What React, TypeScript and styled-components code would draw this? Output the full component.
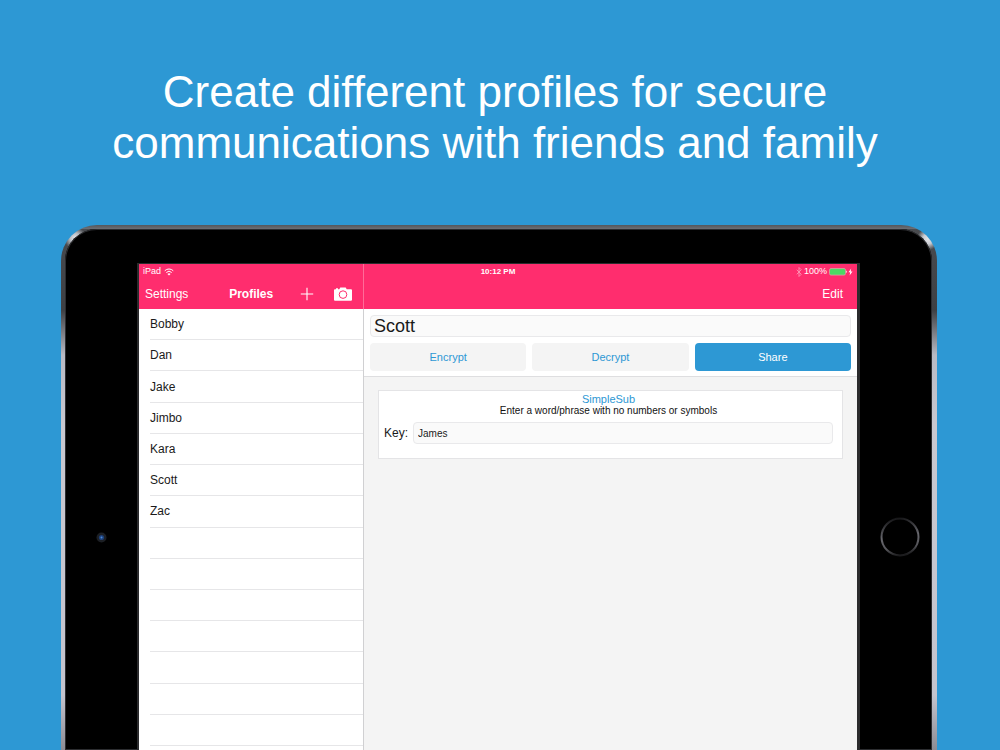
import React from "react";
import styled, { createGlobalStyle } from "styled-components";

const blue = "#2d98d4";
const pink = "#ff2d6e";

const GlobalStyle = createGlobalStyle`
  *, *::before, *::after { box-sizing: border-box; }
  body {
    margin: 0;
    background: ${blue};
    color: #1a1a1a;
    font-family: "Liberation Sans", Arial, sans-serif;
  }
  button, input { font: inherit; color: inherit; margin: 0; }
`;

const Page = styled.div`
  min-height: 100vh;
  display: flex;
  flex-direction: column;
`;

const Headline = styled.h1`
  margin: 0;
  padding: 66px 30px 57px 20px;
  color: #fff;
  font-size: 44px;
  font-weight: 400;
  line-height: 51px;
  text-align: center;
`;

const Frame = styled.div`
  flex: 1;
  display: flex;
  margin: 0 63px 0 61px;
  padding: 4px 5px 0 4px;
  border-radius: 36px 36px 0 0;
  background:
    radial-gradient(circle at 14px 13px, #e4e6ea 0, #b9bcc2 5px, transparent 11px),
    radial-gradient(circle at calc(100% - 9px) 14px, #e4e6ea 0, #c9ccd2 5px, transparent 11px),
    linear-gradient(#54575c 0, #6c6f75 4px, transparent 4px) 0 0 / 100% 4px no-repeat,
    linear-gradient(#4a4c50 0, #3e4044 85px, #b8bac4 130px, #c8c8d0 200px, #c4c4ce 470px, #8c8c94 100%);
`;

const Bezel = styled.div`
  position: relative;
  flex: 1;
  display: flex;
  padding: 34px 72px 0;
  border-radius: 32px 32px 0 0;
  background: #000;
  box-shadow: inset 0 0 0 1px #2c2d30;
`;

const CameraLens = styled.svg`
  position: absolute;
  left: 31px;
  top: 303px;
`;

const HomeButton = styled.svg`
  position: absolute;
  right: 12px;
  top: 288px;
`;

const Screen = styled.div`
  flex: 1;
  display: flex;
  flex-direction: column;
  border: solid #2b2b2d;
  border-width: 1px 3px 0 2px;
  background: #f4f4f4;
`;

const StatusBar = styled.div`
  height: 15px;
  display: flex;
  align-items: center;
  padding: 0 4px;
  background: linear-gradient(#ff6c98, #ff6c98) 224px 0 / 1px 100% no-repeat ${pink};
  color: #fff;
  font-size: 9px;
  line-height: 15px;
`;

const StatusSide = styled.span<{ $end?: boolean }>`
  flex: 1;
  display: flex;
  align-items: center;
  justify-content: ${(p) => (p.$end ? "flex-end" : "flex-start")};
  gap: ${(p) => (p.$end ? 2 : 3)}px;
`;

const Clock = styled.span`
  flex: none;
  font-size: 8px;
  font-weight: 700;
`;

const Columns = styled.div`
  flex: 1;
  display: flex;
`;

const Sidebar = styled.nav`
  flex: none;
  width: 225px;
  display: flex;
  flex-direction: column;
  border-right: 1px solid #d0d0d2;
  background: #fff;
`;

const Detail = styled.main`
  flex: 1;
  min-width: 0;
`;

const NavRow = styled.header<{ $end?: boolean }>`
  height: 30px;
  display: flex;
  align-items: center;
  justify-content: ${(p) => (p.$end ? "flex-end" : "space-between")};
  margin-right: ${(p) => (p.$end ? 0 : -1)}px;
  padding: 0 ${(p) => (p.$end ? 14 : 11)}px 0 6px;
  border-right: ${(p) => (p.$end ? "0" : "1px solid #ff6c98")};
  background: ${pink};
  color: #fff;
`;

const BarButton = styled.button`
  display: flex;
  align-items: center;
  padding: 0;
  border: 0;
  background: none;
  font-size: 12px;
  line-height: 16px;
`;

const BarActions = styled.div`
  display: flex;
  align-items: center;
  gap: 20px;
`;

const BarTitle = styled.h2`
  margin: 0 -14px 0 0;
  font-size: 12px;
  line-height: 16px;
`;

const ProfileList = styled.ul`
  flex: 1;
  display: flex;
  flex-direction: column;
  margin: 0;
  padding: 0 0 4px 11px;
  list-style: none;
`;

const ProfileRow = styled.li`
  flex: 1;
  min-height: 31px;
  display: flex;
  border-bottom: 1px solid #e6e6e8;
`;

const ProfileLink = styled.a`
  flex: 1;
  display: flex;
  align-items: center;
  color: #1a1a1a;
  font-size: 12px;
  line-height: 16px;
  text-decoration: none;
`;

const Editor = styled.section`
  display: flex;
  flex-direction: column;
  gap: 6px;
  padding: 6px 6px 5px;
  border-bottom: 1px solid #dedee0;
  background: #fff;
`;

const Field = styled.input<{ $large?: boolean }>`
  flex: 1 1 22px;
  width: 100%;
  min-width: 0;
  height: 22px;
  padding: 0 ${(p) => (p.$large ? 3 : 4)}px;
  border: 1px solid #e9e9eb;
  border-radius: 4px;
  background: #fafafa;
  font-size: ${(p) => (p.$large ? 18 : 10)}px;
  outline: none;
`;

const Actions = styled.div`
  display: grid;
  grid-template-columns: repeat(3, 1fr);
  gap: 6px;
`;

const ActionButton = styled.button<{ $primary?: boolean }>`
  height: 28px;
  padding: 0;
  border: 0;
  border-radius: 4px;
  background: ${(p) => (p.$primary ? blue : "#f4f4f4")};
  color: ${(p) => (p.$primary ? "#fff" : blue)};
  font-size: 11px;
`;

const CipherCard = styled.section`
  margin: 13px 14px;
  padding: 2px 9px 14px 5px;
  border: 1px solid #e4e4e6;
  background: #fff;
`;

const CipherName = styled.h3`
  margin: 0;
  color: ${blue};
  font-size: 11px;
  font-weight: 400;
  line-height: 12px;
  text-align: center;
`;

const CipherHint = styled.p`
  margin: 0 0 5px;
  color: #111;
  font-size: 10px;
  line-height: 12px;
  text-align: center;
`;

const KeyRow = styled.div`
  display: flex;
  align-items: center;
  gap: 5px;
`;

const KeyLabel = styled.label`
  font-size: 12px;
  line-height: 16px;
`;

const profiles = ["Bobby", "Dan", "Jake", "Jimbo", "Kara", "Scott", "Zac"];
const emptyRows = 7;

const WifiIcon = () => (
  <svg width="10" height="8" viewBox="0 0 20 16" fill="none" stroke="#fff" strokeWidth="2" aria-hidden="true">
    <path d="M1.5 5.500a12 12 0 0 1 17 0M4.6 9a7.6 7.6 0 0 1 10.8 0" />
    <path d="M10 15.2 6.9 12a4.4 4.4 0 0 1 6.2 0z" fill="#fff" stroke="none" />
  </svg>
);

const BluetoothIcon = () => (
  <svg width="6" height="10" viewBox="0 0 12 20" fill="none" stroke="#ff9dbb" strokeWidth="1.6" aria-hidden="true">
    <path d="m1.5 5.5 9 9L6 19V1l4.500 4.500-9 9" />
  </svg>
);

const BatteryIcon = () => (
  <svg width="24" height="8" viewBox="0 0 24 8" aria-hidden="true">
    <rect x="0.500" y="0.500" width="16" height="6.600" rx="1.500" fill="#4cd964" stroke="#d3a5a4" strokeWidth="0.800" />
    <path d="M17.300 2.500c1 .3 1 2.300 0 2.600z" fill="#fff" />
    <path d="M22.200.5 19.500 4.300h1.700L20.600 7.500l2.900-4.100h-1.800z" fill="#fff" />
  </svg>
);

const PlusIcon = () => (
  <svg width="14" height="14" viewBox="0 0 14 14" stroke="#fff" strokeWidth="1.100" aria-hidden="true">
    <path d="M7 .8v12.400M.8 7h12.400" />
  </svg>
);

const CameraIcon = () => (
  <svg width="18" height="14" viewBox="0 0 18 14" aria-hidden="true">
    <path
      d="M1 2.300h1V1.300h2v1h1.300L6.300.5h5.400l1 1.800H17a1 1 0 0 1 1 1V12.700a1 1 0 0 1-1 1H1a1 1 0 0 1-1-1V3.300a1 1 0 0 1 1-1z"
      fill="#fff"
    />
    <circle cx="9" cy="7.600" r="3.800" fill="none" stroke={pink} strokeWidth="1" />
  </svg>
);

export default function App() {
  return (
    <>
      <GlobalStyle />
      <Page>
        <Headline>
          Create different profiles for secure
          <br />
          communications with friends and family
        </Headline>
        <Frame>
          <Bezel>
            <CameraLens width="11" height="11" viewBox="0 0 11 11" aria-hidden="true">
              <circle cx="5.500" cy="5.500" r="5" fill="#1c1f24" />
              <circle cx="5.500" cy="5.500" r="2.600" fill="#1d3f78" />
              <circle cx="5.500" cy="5.500" r="1" fill="#4a8ad8" />
            </CameraLens>
            <HomeButton width="40" height="40" viewBox="0 0 40 40" aria-hidden="true">
              <defs>
                <linearGradient id="ring" x1="0.300" y1="0" x2="0.450" y2="1">
                  <stop offset="0" stopColor="#151517" />
                  <stop offset="0.500" stopColor="#68686e" />
                  <stop offset="0.800" stopColor="#55555a" />
                  <stop offset="1" stopColor="#1c1c1e" />
                </linearGradient>
              </defs>
              <circle cx="20" cy="20" r="18.500" fill="none" stroke="url(#ring)" strokeWidth="2" />
            </HomeButton>
            <Screen>
              <StatusBar>
                <StatusSide>
                  iPad
                  <WifiIcon />
                </StatusSide>
                <Clock>10:12 PM</Clock>
                <StatusSide $end>
                  <BluetoothIcon />
                  100%
                  <BatteryIcon />
                </StatusSide>
              </StatusBar>
              <Columns>
                <Sidebar>
                  <NavRow>
                    <BarButton>Settings</BarButton>
                    <BarTitle>Profiles</BarTitle>
                    <BarActions>
                      <BarButton aria-label="Add profile">
                        <PlusIcon />
                      </BarButton>
                      <BarButton aria-label="Scan profile">
                        <CameraIcon />
                      </BarButton>
                    </BarActions>
                  </NavRow>
                  <ProfileList>
                    {profiles.map((name) => (
                      <ProfileRow key={name}>
                        <ProfileLink href={`#${name}`}>{name}</ProfileLink>
                      </ProfileRow>
                    ))}
                    {Array.from({ length: emptyRows }, (_, i) => (
                      <ProfileRow key={i} aria-hidden="true" />
                    ))}
                  </ProfileList>
                </Sidebar>
                <Detail>
                  <NavRow $end>
                    <BarButton>Edit</BarButton>
                  </NavRow>
                  <Editor>
                    <Field $large aria-label="Profile name" defaultValue="Scott" />
                    <Actions>
                      <ActionButton>Encrypt</ActionButton>
                      <ActionButton>Decrypt</ActionButton>
                      <ActionButton $primary>Share</ActionButton>
                    </Actions>
                  </Editor>
                  <CipherCard>
                    <CipherName>SimpleSub</CipherName>
                    <CipherHint>Enter a word/phrase with no numbers or symbols</CipherHint>
                    <KeyRow>
                      <KeyLabel htmlFor="key">Key:</KeyLabel>
                      <Field id="key" defaultValue="James" />
                    </KeyRow>
                  </CipherCard>
                </Detail>
              </Columns>
            </Screen>
          </Bezel>
        </Frame>
      </Page>
    </>
  );
}
